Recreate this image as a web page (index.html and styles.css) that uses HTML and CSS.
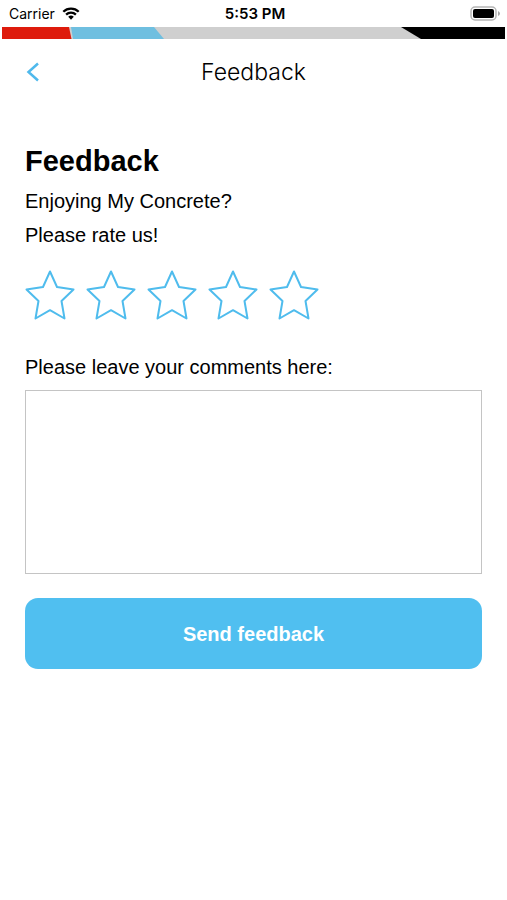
FILE: index.html
```html
<!DOCTYPE html>
<html lang="en">
<head>
  <meta charset="utf-8">
  <meta name="viewport" content="width=device-width, initial-scale=1">
  <title>Feedback</title>
  <link rel="stylesheet" href="styles.css">
</head>
<body>
  <div class="status">
    <div class="status-network">
      <span>Carrier</span>
      <svg class="wifi" viewBox="0 0 18 13" aria-hidden="true">
        <path d="M1.3 4.7a11 11 0 0 1 15.4 0M4.1 7.6a7 7 0 0 1 9.8 0" fill="none" stroke="#000" stroke-width="2.3"/>
        <path d="M6.2 9.8a4 4 0 0 1 5.6 0L9 12.7z" fill="#000"/>
      </svg>
    </div>
    <span class="status-time">5:53 PM</span>
    <svg class="battery" viewBox="0 0 31 15" aria-hidden="true">
      <rect x="1" y="1" width="25" height="13" rx="4" fill="#fff" stroke="#b5b5b5" stroke-width="1.5"/>
      <rect x="3" y="3" width="21" height="9" rx="2" fill="#000"/>
      <path d="M28 5v5q2-1 2-2.500t-2-2.500z" fill="#a8a8a8"/>
    </svg>
  </div>
  <svg class="stripe" viewBox="0 0 503 12" preserveAspectRatio="none" aria-hidden="true">
    <path d="M0 0h503v12H0z" fill="#cfcfcf"/>
    <path d="M0 0h67l2.500 12H0z" fill="#de1b0c"/>
    <path d="M69 0H152l10 12H71z" fill="#6fbfe0"/>
    <path d="M399 0h104v12h-84z" fill="#000"/>
  </svg>
  <header class="nav">
    <button class="back" type="button" aria-label="Back">
      <svg viewBox="0 0 14 20" aria-hidden="true"><path d="M13 1.500 3.500 10l9.500 8.500" fill="none" stroke="#4fb9ec" stroke-width="2.500"/></svg>
    </button>
    <span class="nav-title">Feedback</span>
  </header>
  <main>
    <h1>Feedback</h1>
    <p>Enjoying My Concrete?</p>
    <p>Please rate us!</p>
    <form>
      <div class="stars" role="radiogroup" aria-label="Rating">
        <label class="star"><input type="radio" name="rating" value="1" aria-label="1 star"><svg viewBox="0 0 50 50"><path d="M25 1.500 32 17l16.500 2.500L36.500 31l3 17.500L25 40.200l-14.500 8.300 3-17.500L1.500 19.500 18 17z"/></svg></label>
        <label class="star"><input type="radio" name="rating" value="2" aria-label="2 stars"><svg viewBox="0 0 50 50"><path d="M25 1.500 32 17l16.500 2.500L36.500 31l3 17.500L25 40.200l-14.500 8.300 3-17.500L1.500 19.500 18 17z"/></svg></label>
        <label class="star"><input type="radio" name="rating" value="3" aria-label="3 stars"><svg viewBox="0 0 50 50"><path d="M25 1.500 32 17l16.500 2.500L36.500 31l3 17.500L25 40.200l-14.500 8.300 3-17.500L1.500 19.500 18 17z"/></svg></label>
        <label class="star"><input type="radio" name="rating" value="4" aria-label="4 stars"><svg viewBox="0 0 50 50"><path d="M25 1.500 32 17l16.500 2.500L36.500 31l3 17.500L25 40.200l-14.500 8.300 3-17.500L1.500 19.500 18 17z"/></svg></label>
        <label class="star"><input type="radio" name="rating" value="5" aria-label="5 stars"><svg viewBox="0 0 50 50"><path d="M25 1.500 32 17l16.500 2.500L36.500 31l3 17.500L25 40.200l-14.500 8.300 3-17.500L1.500 19.500 18 17z"/></svg></label>
      </div>
      <label class="comments-label" for="comments">Please leave your comments here:</label>
      <textarea id="comments" name="comments"></textarea>
      <button class="send" type="submit">Send feedback</button>
    </form>
  </main>
</body>
</html>
```
FILE: styles.css
```css
* {
  box-sizing: border-box;
}

body {
  margin: 0;
  background: #fff;
  color: #000;
  font-family: "Liberation Sans", Arial, sans-serif;
  font-size: 20px;
  line-height: 34px;
}

svg {
  display: block;
}

.status {
  display: grid;
  grid-template-columns: 1fr auto 1fr;
  align-items: center;
  height: 27px;
  padding: 0 6px 0 9px;
  font-family: Inter, sans-serif;
  font-size: 14px;
  line-height: 26px;
}

.status-network {
  display: flex;
  align-items: center;
  gap: 7px;
}

.wifi {
  width: 18px;
  height: 13px;
}

.status-time {
  font-size: 15px;
  font-weight: 600;
}

.battery {
  justify-self: end;
  width: 31px;
  height: 15px;
}

.stripe {
  width: calc(100% - 4px);
  height: 12px;
  margin: 0 2px;
}

.nav {
  display: grid;
  grid-template-columns: 1fr auto 1fr;
  align-items: center;
  height: 66px;
  padding: 0 25px;
}

.back {
  justify-self: start;
  padding: 0;
  border: 0;
  background: none;
}

.back svg {
  width: 14px;
  height: 20px;
}

.nav-title {
  font-family: Inter, sans-serif;
  font-size: 23px;
  font-weight: 300;
}

main {
  padding: 36px 25px;
}

h1 {
  margin: 0 0 3px;
  font-size: 29px;
  line-height: 40px;
}

p {
  margin: 0;
}

.stars {
  display: flex;
  gap: 11px;
  margin: 18px 0 30px;
}

.star {
  position: relative;
  width: 50px;
  height: 50px;
}

.star input {
  position: absolute;
  inset: 0;
  margin: 0;
  appearance: none;
}

.star path {
  fill: none;
  stroke: #4fbced;
  stroke-width: 2;
  stroke-linejoin: round;
}

.star:has(input:checked) path,
.star:has(~ .star input:checked) path {
  fill: #4fbced;
}

.comments-label {
  display: block;
  margin-bottom: 6px;
}

textarea {
  display: block;
  width: 100%;
  height: 184px;
  padding: 12px;
  border: 1px solid #c4c4c4;
  border-radius: 0;
  font: inherit;
  resize: none;
}

.send {
  display: block;
  width: 100%;
  height: 71px;
  margin-top: 24px;
  border: 0;
  border-radius: 13px;
  background: #50bff0;
  color: #fff;
  font: inherit;
  font-weight: 700;
}
```
